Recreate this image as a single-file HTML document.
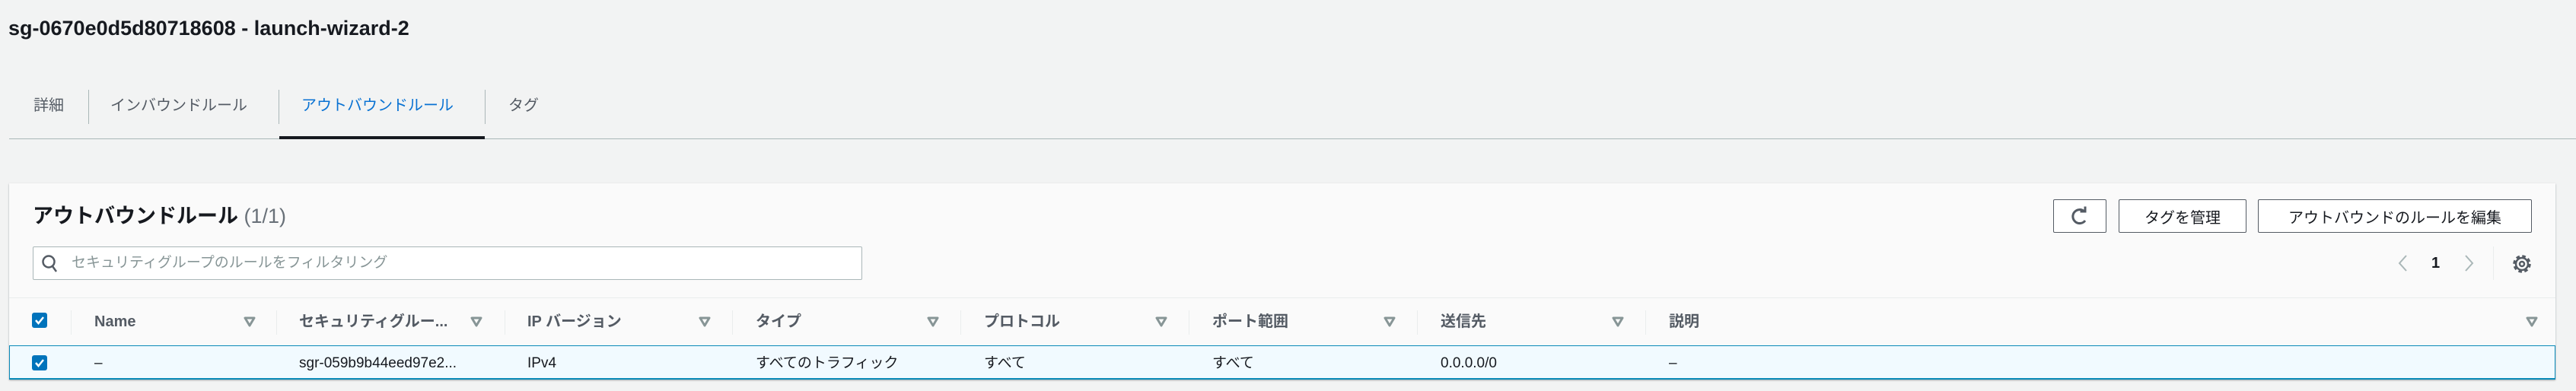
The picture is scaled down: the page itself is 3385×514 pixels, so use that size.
<!DOCTYPE html>
<html><head><meta charset="utf-8"><style>
*{box-sizing:border-box;margin:0;padding:0}
body{width:3385px;height:514px;background:#f2f3f3;font-family:"Liberation Sans","Noto Sans CJK JP",sans-serif;position:relative;overflow:hidden;color:#16191f}
.a{position:absolute;white-space:nowrap}
.title{left:11px;top:22px;font-size:27px;font-weight:bold;line-height:30px}
.tab{top:127px;font-size:20px;color:#545b64;line-height:24px}
.sep{top:118px;height:45px;width:1px;background:#aab7b8}
.panel{left:12px;top:241px;width:3346px;height:258px;background:#fafafa;box-shadow:0 1px 2px rgba(0,28,36,.35)}
.btn{top:262px;height:44px;border:1px solid #545b64;border-radius:2px;background:#fff;font-size:20px;color:#16191f;display:flex;align-items:center;justify-content:center}
.th{top:411px;font-size:20px;font-weight:bold;color:#545b64;line-height:24px}
.td{top:466px;font-size:19px;color:#16191f;line-height:24px}
.dv{top:408px;height:32px;width:1px;background:#eaeded}
.cb{width:20px;height:20px;background:#0073bb;border-radius:3px;left:42px}
.tri{top:416px}
</style></head><body>
<div class="a title">sg-0670e0d5d80718608 - launch-wizard-2</div>
<div class="a tab" style="left:44px">詳細</div>
<div class="a sep" style="left:116px"></div>
<div class="a tab" style="left:145px">インバウンドルール</div>
<div class="a sep" style="left:366px"></div>
<div class="a tab" style="left:396px;color:#0972d3">アウトバウンドルール</div>
<div class="a sep" style="left:637px"></div>
<div class="a tab" style="left:668px">タグ</div>
<div class="a" style="left:12px;top:182px;width:3373px;height:1px;background:#aab7b8"></div>
<div class="a" style="left:367px;top:179px;width:270px;height:4px;background:#16191f"></div>

<div class="a panel"></div>
<div class="a" style="left:43px;top:268px;font-size:27px;font-weight:bold;line-height:32px">アウトバウンドルール <span style="font-weight:normal;color:#687078">(1/1)</span></div>
<div class="a" style="left:43px;top:324px;width:1090px;height:44px;background:#fff;border:1px solid #aab7b8;border-radius:2px"></div>
<svg class="a" style="left:54px;top:334px" width="24" height="26" viewBox="0 0 24 26"><circle cx="10" cy="10" r="7.5" fill="none" stroke="#545b64" stroke-width="2.5"/><path d="M15 16l5 7" stroke="#545b64" stroke-width="2.5"/></svg>
<div class="a" style="left:94px;top:334px;font-size:19px;color:#879596;line-height:24px">セキュリティグループのルールをフィルタリング</div>

<div class="a btn" style="left:2698px;width:70px"><svg width="26" height="28" viewBox="0 0 26 28"><path d="M19 8A9 9 0 1 0 20 20" fill="none" stroke="#545b64" stroke-width="3"/><path d="M13.5 8H20V1.5" fill="none" stroke="#545b64" stroke-width="3"/></svg></div>
<div class="a btn" style="left:2784px;width:168px">タグを管理</div>
<div class="a btn" style="left:2967px;width:360px">アウトバウンドのルールを編集</div>

<svg class="a" style="left:3150px;top:334px" width="14" height="24" viewBox="0 0 14 24"><path d="M12 2L3 12l9 10" fill="none" stroke="#aab7b8" stroke-width="2"/></svg>
<div class="a" style="left:3195px;top:334px;font-size:20px;font-weight:bold;line-height:24px">1</div>
<svg class="a" style="left:3238px;top:334px" width="14" height="24" viewBox="0 0 14 24"><path d="M2 2l9 10-9 10" fill="none" stroke="#aab7b8" stroke-width="2"/></svg>
<div class="a" style="left:3276px;top:324px;width:1px;height:44px;background:#eaeded"></div>
<svg class="a" style="left:3300px;top:333px" width="28" height="28" viewBox="0 0 28 28"><circle cx="14" cy="14" r="10" fill="none" stroke="#545b64" stroke-width="3.5" stroke-dasharray="4.5 3.35"/><circle cx="14" cy="14" r="8" fill="none" stroke="#545b64" stroke-width="2.5"/><circle cx="14" cy="14" r="3" fill="none" stroke="#545b64" stroke-width="2.5"/></svg>

<div class="a" style="left:12px;top:391px;width:3346px;height:1px;background:#eaeded"></div>
<div class="a cb" style="top:411px"><svg width="20" height="20" viewBox="0 0 20 20"><path d="M5 10l3.5 4L15 6" fill="none" stroke="#fff" stroke-width="2.5"/></svg></div>
<div class="a dv" style="left:93px"></div>
<div class="a th" style="left:124px">Name</div>
<div class="a dv" style="left:363px"></div>
<div class="a th" style="left:393px">セキュリティグルー...</div>
<div class="a dv" style="left:663px"></div>
<div class="a th" style="left:693px">IP バージョン</div>
<div class="a dv" style="left:962px"></div>
<div class="a th" style="left:993px">タイプ</div>
<div class="a dv" style="left:1262px"></div>
<div class="a th" style="left:1293px">プロトコル</div>
<div class="a dv" style="left:1562px"></div>
<div class="a th" style="left:1593px">ポート範囲</div>
<div class="a dv" style="left:1862px"></div>
<div class="a th" style="left:1893px">送信先</div>
<div class="a dv" style="left:2162px"></div>
<div class="a th" style="left:2193px">説明</div>
<svg class="a tri" style="left:320px" width="16" height="14" viewBox="0 0 16 14"><path d="M2 2h12L8 12z" fill="none" stroke="#879596" stroke-width="3" stroke-linejoin="round"/></svg>
<svg class="a tri" style="left:618px" width="16" height="14" viewBox="0 0 16 14"><path d="M2 2h12L8 12z" fill="none" stroke="#879596" stroke-width="3" stroke-linejoin="round"/></svg>
<svg class="a tri" style="left:918px" width="16" height="14" viewBox="0 0 16 14"><path d="M2 2h12L8 12z" fill="none" stroke="#879596" stroke-width="3" stroke-linejoin="round"/></svg>
<svg class="a tri" style="left:1218px" width="16" height="14" viewBox="0 0 16 14"><path d="M2 2h12L8 12z" fill="none" stroke="#879596" stroke-width="3" stroke-linejoin="round"/></svg>
<svg class="a tri" style="left:1518px" width="16" height="14" viewBox="0 0 16 14"><path d="M2 2h12L8 12z" fill="none" stroke="#879596" stroke-width="3" stroke-linejoin="round"/></svg>
<svg class="a tri" style="left:1818px" width="16" height="14" viewBox="0 0 16 14"><path d="M2 2h12L8 12z" fill="none" stroke="#879596" stroke-width="3" stroke-linejoin="round"/></svg>
<svg class="a tri" style="left:2118px" width="16" height="14" viewBox="0 0 16 14"><path d="M2 2h12L8 12z" fill="none" stroke="#879596" stroke-width="3" stroke-linejoin="round"/></svg>
<svg class="a tri" style="left:3319px" width="16" height="14" viewBox="0 0 16 14"><path d="M2 2h12L8 12z" fill="none" stroke="#879596" stroke-width="3" stroke-linejoin="round"/></svg>

<div class="a" style="left:12px;top:454px;width:3346px;height:45px;background:#f1faff;border:1px solid #0a8ab8;border-bottom-width:2px"></div>
<div class="a cb" style="top:467px"><svg width="20" height="20" viewBox="0 0 20 20"><path d="M5 10l3.5 4L15 6" fill="none" stroke="#fff" stroke-width="2.5"/></svg></div>
<div class="a td" style="left:124px">–</div>
<div class="a td" style="left:393px">sgr-059b9b44eed97e2...</div>
<div class="a td" style="left:693px">IPv4</div>
<div class="a td" style="left:993px">すべてのトラフィック</div>
<div class="a td" style="left:1293px">すべて</div>
<div class="a td" style="left:1593px">すべて</div>
<div class="a td" style="left:1893px">0.0.0.0/0</div>
<div class="a td" style="left:2193px">–</div>
</body></html>
